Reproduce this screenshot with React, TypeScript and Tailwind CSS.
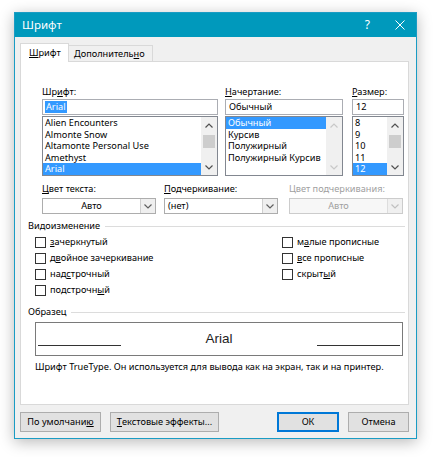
import type { ReactNode } from "react";

// Word "Шрифт" dialog (Windows 10 look)

const UI = "font-['Noto_Sans','Open_Sans',sans-serif]";

function U({ children }: { children: ReactNode }) {
  return <span className="underline underline-offset-[1px]">{children}</span>;
}

function Chevron({
  dir = "down",
  className = "",
}: {
  dir?: "up" | "down";
  className?: string;
}) {
  return (
    <svg viewBox="0 0 8 5" className={`h-[5px] w-[8px] ${className}`} aria-hidden="true">
      <path
        d={dir === "up" ? "M0.5 4.5 4 1 7.5 4.5" : "M0.5 0.5 4 4 7.5 0.5"}
        fill="none"
        stroke="currentColor"
        strokeWidth="1.2"
      />
    </svg>
  );
}

function Scrollbar({ disabled = false }: { disabled?: boolean }) {
  const arrow = disabled ? "text-[#c8c8c8]" : "text-[#505050]";
  return (
    <div className="flex h-full w-[16px] flex-col items-center bg-[#f0f0f0]">
      <div className={`flex h-[16px] w-full items-center justify-center ${arrow}`}>
        <Chevron dir="up" />
      </div>
      <div className="flex-1 w-full px-[2px]">
        {!disabled && <div className="mt-[2px] h-[13px] w-full bg-[#cdcdcd]" />}
      </div>
      <div className={`flex h-[16px] w-full items-center justify-center ${arrow}`}>
        <Chevron />
      </div>
    </div>
  );
}

function ListBox({
  items,
  selected,
  disabled,
  className,
}: {
  items: string[];
  selected: number;
  disabled?: boolean;
  className: string;
}) {
  return (
    <div className={`mt-[1px] flex h-[60px] border border-[#828790] bg-white ${className}`}>
      <div className="flex-1 overflow-hidden">
        {items.map((it, i) => (
          <div
            key={it}
            className={`h-[11.6px] pl-[2px] text-[9.2px] leading-[11.6px] ${
              i === selected ? "bg-[#3399ff] text-white" : "text-black"
            }`}
          >
            {it}
          </div>
        ))}
      </div>
      <Scrollbar disabled={disabled} />
    </div>
  );
}

function Combo({
  value,
  center,
  disabled,
  className,
}: {
  value: string;
  center?: boolean;
  disabled?: boolean;
  className: string;
}) {
  return (
    <div
      className={`mt-[3px] flex h-[16px] border ${
        disabled ? "border-[#cccccc] bg-[#f7f7f7] text-[#a0a0a0]" : "border-[#adadad] bg-white text-black"
      } ${className}`}
    >
      <div
        className={`flex-1 text-[9.2px] leading-[14px] ${center ? "text-center" : "pl-[3px]"}`}
      >
        {value}
      </div>
      <div
        className={`flex w-[15px] items-center justify-center border-l ${
          disabled ? "border-[#dddddd] bg-[#f0f0f0] text-[#c0c0c0]" : "border-[#cfcfcf] bg-[#efefef] text-[#606060]"
        }`}
      >
        <Chevron />
      </div>
    </div>
  );
}

function Check({ children }: { children: ReactNode }) {
  return (
    <div className="flex h-[16px] items-center">
      <div className="h-[11px] w-[11px] border border-[#333333] bg-white" />
      <span className="ml-[4px] text-[9.2px] text-black">{children}</span>
    </div>
  );
}

function GroupTitle({ title }: { title: string }) {
  return (
    <div className="flex h-[12px] items-center">
      <span className="text-[9.2px] leading-[12px] text-black">{title}</span>
      <div className="ml-[5px] h-px flex-1 bg-[#dcdcdc]" />
    </div>
  );
}

function Button({
  children,
  primary,
  className,
}: {
  children: ReactNode;
  primary?: boolean;
  className: string;
}) {
  return (
    <div
      className={`flex h-[20px] items-center justify-center border bg-[#e1e1e1] text-[9.2px] text-black ${
        primary ? "border-[#0078d7] shadow-[inset_0_0_0_1px_#0078d7]" : "border-[#adadad]"
      } ${className}`}
    >
      {children}
    </div>
  );
}

export default function App() {
  return (
    <main className={`h-[457px] w-[434px] bg-white pl-[14px] pt-[12px] ${UI}`}>
      <div className="flex h-[427px] w-[403px] flex-col border border-[#1a9cc4] bg-[#f0f0f0] shadow-[0_3px_14px_rgba(0,0,0,0.28)]">
        {/* title bar */}
        <div className="flex h-[24px] items-center bg-[#0099bc] pl-[7px] text-white">
          <span className="text-[11.5px]">Шрифт</span>
          <span className="ml-auto mr-[25px] text-[12px]">?</span>
          <svg viewBox="0 0 10 10" className="mr-[11px] h-[10px] w-[10px]" aria-hidden="true">
            <path d="M0.5 0.5 9.5 9.5M9.5 0.5 0.5 9.5" stroke="white" strokeWidth="1" />
          </svg>
        </div>

        {/* tabs */}
        <div className="ml-[5px] mt-[6px] flex items-end">
          <div className="relative z-10 -mb-px flex h-[19px] w-[49px] items-center border border-b-0 border-[#d9d9d9] bg-white pl-[8px] text-[9.2px]">
            <U>Ш</U>рифт
          </div>
          <div className="-ml-px flex h-[16px] w-[85px] items-center border border-b-0 border-[#d9d9d9] bg-[#f0f0f0] pl-[5px] text-[9.2px]">
            Дополнитель<U>н</U>о
          </div>
        </div>

        {/* panel */}
        <div className="ml-[5px] flex h-[344px] w-[389px] flex-col border border-[#d9d9d9] bg-white pl-[7px] pr-[3px] pt-[24px] text-black">
          {/* row 1 */}
          <div className="ml-[14px] flex">
            <div className="w-[176px]">
              <div className="text-[9.2px] leading-[12px]">
                Шр<U>и</U>фт:
              </div>
              <div className="mt-[1px] flex h-[16px] items-center border border-[#abadb3] pl-[2px]">
                <span className="bg-[#3399ff] px-px text-[9.2px] leading-[12px] text-white">Arial</span>
              </div>
              <ListBox
                className="w-[176px]"
                selected={4}
                items={["Alien Encounters", "Almonte Snow", "Altamonte Personal Use", "Amethyst", "Arial"]}
              />
            </div>
            <div className="ml-[7px] w-[118px]">
              <div className="text-[9.2px] leading-[12px]">
                <U>Н</U>ачертание:
              </div>
              <div className="mt-[1px] flex h-[16px] items-center border border-[#abadb3] pl-[3px] text-[9.2px]">
                Обычный
              </div>
              <ListBox
                className="w-[118px]"
                selected={0}
                disabled
                items={["Обычный", "Курсив", "Полужирный", "Полужирный Курсив"]}
              />
            </div>
            <div className="ml-[9px] w-[52px]">
              <div className="text-[9.2px] leading-[12px]">
                <U>Р</U>азмер:
              </div>
              <div className="mt-[1px] flex h-[16px] items-center border border-[#abadb3] pl-[3px] text-[9.2px]">
                12
              </div>
              <ListBox className="w-[52px]" selected={4} items={["8", "9", "10", "11", "12"]} />
            </div>
          </div>

          {/* row 2 */}
          <div className="ml-[14px] mt-[7px] flex">
            <div className="w-[114px]">
              <div className="text-[9.2px] leading-[12px]">
                <U>Ц</U>вет текста:
              </div>
              <Combo className="w-[114px]" value="Авто" center />
            </div>
            <div className="ml-[8px] w-[114px]">
              <div className="text-[9.2px] leading-[12px]">
                <U>П</U>одчеркивание:
              </div>
              <Combo className="w-[114px]" value="(нет)" />
            </div>
            <div className="ml-[11px] w-[114px]">
              <div className="text-[9.2px] leading-[12px] text-[#a0a0a0]">Цвет подчеркивания:</div>
              <Combo className="w-[114px]" value="Авто" center disabled />
            </div>
          </div>

          {/* effects */}
          <div className="mt-[6px]">
            <GroupTitle title="Видоизменение" />
          </div>
          <div className="ml-[7px] mt-[2px] flex">
            <div className="w-[247px]">
              <Check>
                <U>з</U>ачеркнутый
              </Check>
              <Check>
                д<U>в</U>ойное зачеркивание
              </Check>
              <Check>
                над<U>с</U>трочный
              </Check>
              <Check>
                подстрочн<U>ы</U>й
              </Check>
            </div>
            <div>
              <Check>
                м<U>а</U>лые прописные
              </Check>
              <Check>
                <U>в</U>се прописные
              </Check>
              <Check>
                скрыт<U>ы</U>й
              </Check>
            </div>
          </div>

          {/* sample */}
          <div className="mt-[8px]">
            <GroupTitle title="Образец" />
          </div>
          <div className="ml-[7px] mt-[4px] flex h-[34px] w-[368px] items-center border border-[#7a7a7a] px-[2px]">
            <div className="mt-[12px] h-px w-[83px] bg-[#333333]" />
            <div className="flex-1 text-center font-['Liberation_Sans',Arial,sans-serif] text-[13.5px] text-[#1e1e1e]">
              Arial
            </div>
            <div className="mt-[12px] h-px w-[83px] bg-[#333333]" />
          </div>
          <div className="ml-[7px] mt-[5px] text-[9.2px] leading-[12px]">
            Шрифт TrueType. Он используется для вывода как на экран, так и на принтер.
          </div>
        </div>

        {/* buttons */}
        <div className="ml-[5px] mt-[7px] flex">
          <Button className="w-[81px]">
            По умолчани<U>ю</U>
          </Button>
          <Button className="ml-[9px] w-[109px]">
            <U>Т</U>екстовые эффекты...
          </Button>
          <Button primary className="ml-[58px] w-[62px]">
            ОК
          </Button>
          <Button className="ml-[9px] w-[61px]">Отмена</Button>
        </div>
      </div>
    </main>
  );
}
